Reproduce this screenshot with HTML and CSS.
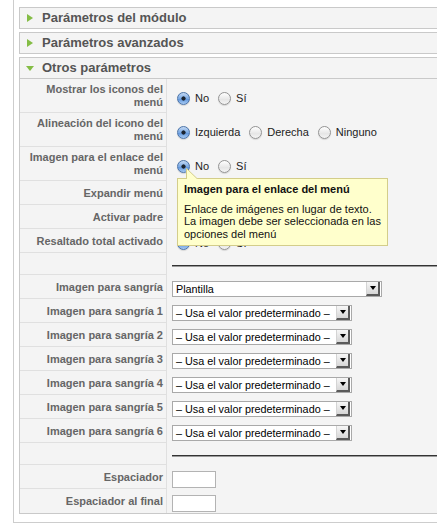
FILE: index.html
```html
<!DOCTYPE html>
<html lang="es">
<head>
  <meta charset="UTF-8">
  <meta name="viewport" content="width=device-width, initial-scale=1.0">
  <title>Parámetros del menú</title>
  <link rel="stylesheet" href="styles.css">
</head>
<body>
  <div class="pane-sliders">
    <div class="panel">
      <h3 class="toggler">Parámetros del módulo</h3>
    </div>
    <div class="panel">
      <h3 class="toggler">Parámetros avanzados</h3>
    </div>
    <div class="panel">
      <h3 class="toggler open">Otros parámetros</h3>
      <div class="paramlist">
        <div class="row">
          <div class="key">Mostrar los iconos del menú</div>
          <div class="value">
            <div class="radios">
              <span class="radio checked"></span><label>No</label>
              <span class="radio"></span><label>Sí</label>
            </div>
          </div>
        </div>
        <div class="row">
          <div class="key">Alineación del icono del menú</div>
          <div class="value">
            <div class="radios">
              <span class="radio checked"></span><label>Izquierda</label>
              <span class="radio"></span><label>Derecha</label>
              <span class="radio"></span><label>Ninguno</label>
            </div>
          </div>
        </div>
        <div class="row">
          <div class="key">Imagen para el enlace del menú</div>
          <div class="value">
            <div class="radios has-tip">
              <span class="radio checked"></span><label>No</label>
              <span class="radio"></span><label>Sí</label>
              <!-- tooltip abierto sobre el parámetro -->
              <div class="tip">
                <svg class="tip-arrow" width="12" height="11" viewBox="0 0 12 11"><path d="M0.5 11 V0.5 L11.5 11" fill="#ffffcc" stroke="#d3cd8a"/></svg>
                <div class="tip-title">Imagen para el enlace del menú</div>
                <div class="tip-text">Enlace de imágenes en lugar de texto.<br>La imagen debe ser seleccionada en las<br>opciones del menú</div>
              </div>
            </div>
          </div>
        </div>
        <div class="row">
          <div class="key">Expandir menú</div>
          <div class="value">
            <div class="radios">
              <span class="radio checked"></span><label>No</label>
              <span class="radio"></span><label>Sí</label>
            </div>
          </div>
        </div>
        <div class="row">
          <div class="key">Activar padre</div>
          <div class="value">
            <div class="radios">
              <span class="radio checked"></span><label>No</label>
              <span class="radio"></span><label>Sí</label>
            </div>
          </div>
        </div>
        <div class="row">
          <div class="key">Resaltado total activado</div>
          <div class="value">
            <div class="radios">
              <span class="radio checked"></span><label>No</label>
              <span class="radio"></span><label>Sí</label>
            </div>
          </div>
        </div>
        <div class="row sep">
          <div class="key"></div>
          <div class="value"><hr></div>
        </div>
        <div class="row">
          <div class="key">Imagen para sangría</div>
          <div class="value">
            <div class="select wide"><span class="text">Plantilla</span><span class="btn"></span></div>
          </div>
        </div>
        <div class="row">
          <div class="key">Imagen para sangría 1</div>
          <div class="value">
            <div class="select"><span class="text">– Usa el valor predeterminado –</span><span class="btn"></span></div>
          </div>
        </div>
        <div class="row">
          <div class="key">Imagen para sangría 2</div>
          <div class="value">
            <div class="select"><span class="text">– Usa el valor predeterminado –</span><span class="btn"></span></div>
          </div>
        </div>
        <div class="row">
          <div class="key">Imagen para sangría 3</div>
          <div class="value">
            <div class="select"><span class="text">– Usa el valor predeterminado –</span><span class="btn"></span></div>
          </div>
        </div>
        <div class="row">
          <div class="key">Imagen para sangría 4</div>
          <div class="value">
            <div class="select"><span class="text">– Usa el valor predeterminado –</span><span class="btn"></span></div>
          </div>
        </div>
        <div class="row">
          <div class="key">Imagen para sangría 5</div>
          <div class="value">
            <div class="select"><span class="text">– Usa el valor predeterminado –</span><span class="btn"></span></div>
          </div>
        </div>
        <div class="row">
          <div class="key">Imagen para sangría 6</div>
          <div class="value">
            <div class="select"><span class="text">– Usa el valor predeterminado –</span><span class="btn"></span></div>
          </div>
        </div>
        <div class="row sep">
          <div class="key"></div>
          <div class="value"><hr></div>
        </div>
        <div class="row">
          <div class="key">Espaciador</div>
          <div class="value"><input type="text" class="text-input"></div>
        </div>
        <div class="row last">
          <div class="key">Espaciador al final</div>
          <div class="value"><input type="text" class="text-input"></div>
        </div>
      </div>
    </div>
  </div>
</body>
</html>
```

FILE: styles.css
```css
html, body {
  margin: 0;
  padding: 0;
  overflow: hidden;
  background: #fff;
}
body {
  font-family: "Liberation Sans", Arial, Helvetica, sans-serif;
  font-size: 11px;
  color: #222;
}
.pane-sliders {
  width: 520px;
  margin-left: 13px;
  padding: 7px 0 8px 5px;
  border: 1px solid #cdcdcd;
  border-top: none;
}
.panel {
  border: 1px solid #c9c9c9;
  background: #f4f4f4;
  margin-bottom: 3px;
}
.panel:last-child {
  margin-bottom: 0;
}
.toggler {
  position: relative;
  margin: 0;
  height: 20px;
  line-height: 20px;
  padding-left: 22px;
  font-size: 13px;
  font-weight: bold;
  color: #555;
}
.toggler::before {
  content: '';
  position: absolute;
  left: 7px;
  top: 6px;
  border-left: 6px solid #84bd45;
  border-top: 4px solid transparent;
  border-bottom: 4px solid transparent;
}
.toggler.open {
  border-bottom: 1px solid #c9c9c9;
}
.toggler.open::before {
  left: 6px;
  top: 8px;
  border-top: 5px solid #84bd45;
  border-left: 4px solid transparent;
  border-right: 4px solid transparent;
  border-bottom: none;
}
.row {
  display: grid;
  grid-template-columns: 147px 1fr;
}
.key {
  box-sizing: border-box;
  min-height: 24px;
  padding: 4px 3px 3px 4px;
  display: flex;
  align-items: center;
  justify-content: flex-end;
  text-align: right;
  line-height: 13px;
  font-weight: bold;
  color: #666;
  border-right: 1px solid #e0e0e0;
  border-bottom: 1px solid #e0e0e0;
}
.row.sep .key {
  min-height: 22px;
}
.row.last .key {
  border-bottom: none;
}
.value {
  display: flex;
  align-items: center;
  padding: 4px 0 0 5px;
}
.radios {
  display: flex;
  align-items: center;
  line-height: 13px;
  color: #222;
}
.radios label {
  margin: 0 4px 0 2px;
}
.radio {
  display: inline-block;
  box-sizing: border-box;
  width: 13px;
  height: 13px;
  margin: 0 3px 0 5px;
  border-radius: 50%;
  border: 1px solid #939393;
  background: linear-gradient(#ffffff, #e6e6e6 60%, #f4f4f4);
  box-shadow: 0 1px 1px rgba(0, 0, 0, 0.12);
}
.radio.checked {
  border-color: #4b73a8;
  background: radial-gradient(circle, #1b2430 0, #1b2430 1.8px, transparent 2.4px),
              linear-gradient(#c3d9f4, #7aa9e4 50%, #5f95dc 55%, #a8cbf3);
}
.has-tip {
  position: relative;
}
.tip {
  position: absolute;
  left: 5px;
  top: 18px;
  z-index: 2;
  width: 211px;
  box-sizing: border-box;
  padding: 4px 6px 5px;
  background: #ffffcc;
  border: 1px solid #d3cd8a;
  color: #111;
  white-space: nowrap;
}
.tip-arrow {
  position: absolute;
  left: 8px;
  top: -11px;
  display: block;
}
.tip-title {
  font-weight: bold;
  line-height: 13px;
  margin-bottom: 7px;
}
.tip-text {
  line-height: 12.5px;
}
.value hr {
  flex: 1;
  margin: 0;
  border: 0;
  border-top: 1px solid #333;
  border-bottom: 1px solid #9a9a9a;
}
.select {
  display: flex;
  align-items: center;
  box-sizing: border-box;
  width: 180px;
  height: 16px;
  border: 1px solid #a9a9a9;
  background: #fff;
  color: #000;
  white-space: nowrap;
}
.select.wide {
  width: 210px;
}
.select .text {
  flex: 1;
  padding-left: 3px;
  line-height: 13px;
  font-size: 10.8px;
  overflow: hidden;
}
.select .btn {
  position: relative;
  box-sizing: border-box;
  width: 14px;
  height: 14px;
  margin-right: 1px;
  background: linear-gradient(#f7f7f7, #d6d6d6);
  border-left: 1px solid #d4d4d4;
  border-right: 2px solid #5a5a5a;
  border-bottom: 2px solid #5a5a5a;
}
.select .btn::after {
  content: '';
  position: absolute;
  left: 3px;
  top: 4px;
  border-top: 4px solid #000;
  border-left: 3px solid transparent;
  border-right: 3px solid transparent;
}
.text-input {
  box-sizing: border-box;
  width: 44px;
  height: 17px;
  margin: 0;
  padding: 0;
  border: 1px solid #b3b3b3;
  background: #fff;
}
```
